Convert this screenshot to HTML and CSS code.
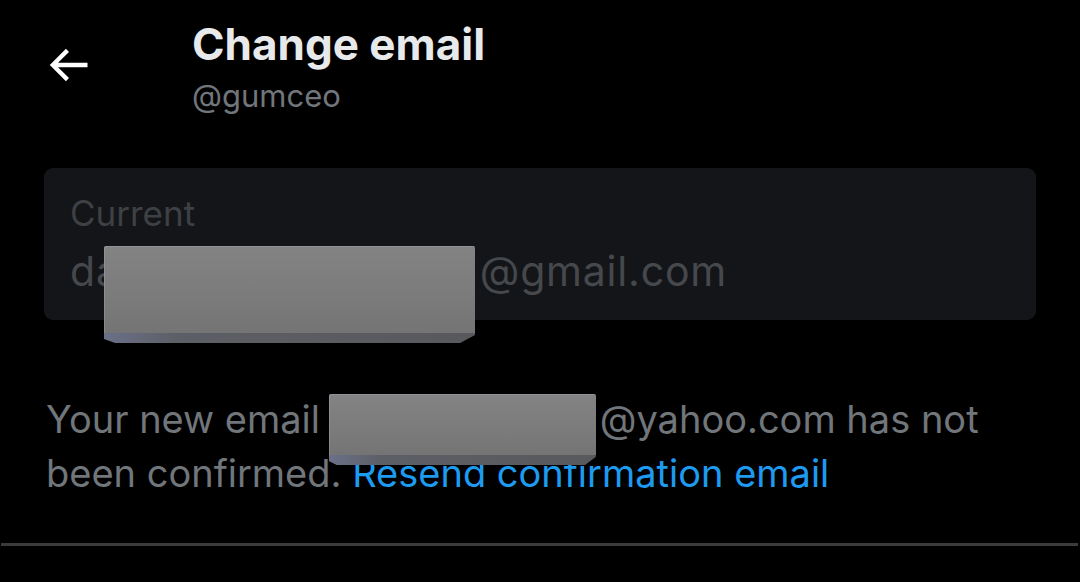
FILE: index.html
```html
<!DOCTYPE html>
<html lang="en">
<head>
<meta charset="utf-8">
<title>Change email</title>
<link rel="stylesheet" href="styles.css">
</head>
<body>
<div class="page">
  <header class="top">
    <div class="back">
      <svg viewBox="0 0 24 24" width="52" height="52" aria-hidden="true"><path fill="#ffffff" d="M7.414 13l5.043 5.04-1.414 1.42L3.586 12l7.457-7.46 1.414 1.42L7.414 11H21v2H7.414z"/></svg>
    </div>
    <div class="titles">
      <h1 class="title">Change email</h1>
      <div class="handle">@gumceo</div>
    </div>
  </header>
  <main class="content">
    <div class="field">
      <div class="label">Current</div>
      <div class="value">da<span class="gap gap-one"></span>@gmail.com<span class="redact redact-one"></span></div>
    </div>
    <p class="notice">Your new email <span class="gap gap-two"><span class="redact redact-two"></span></span>@yahoo.com has not been confirmed. <a class="link" href="#">Resend confirmation email</a></p>
  </main>
  <div class="divider"></div>
</div>
</body>
</html>
```

FILE: styles.css
```css
html, body {
  margin: 0;
  padding: 0;
  background: #000000;
}
body {
  font-family: Inter, "Noto Sans", "Liberation Sans", sans-serif;
  color: #e7e9ea;
  width: 1080px;
  height: 582px;
  overflow: hidden;
}
.page {
  display: flex;
  flex-direction: column;
}
.top {
  display: flex;
  align-items: flex-start;
  padding-top: 18px;
  height: 132px;
  box-sizing: border-box;
}
.back {
  width: 192px;
  padding-left: 42px;
  padding-top: 21px;
  box-sizing: border-box;
  flex: none;
}
.back svg {
  display: block;
}
.titles {
  display: flex;
  flex-direction: column;
}
.title {
  margin: 0;
  font-size: 44px;
  font-weight: 700;
  line-height: 52px;
  color: #e7e9ea;
  letter-spacing: 0;
}
.handle {
  font-size: 31px;
  line-height: 40px;
  margin-top: 6px;
  color: #71767b;
}
.content {
  padding: 36px 44px 0 44px;
}
.field {
  background: #141518;
  border-radius: 9px;
  height: 152px;
  box-sizing: border-box;
  padding: 25px 26px 0 26px;
}
.label {
  font-size: 35px;
  line-height: 40px;
  color: #3d4044;
}
.value {
  position: relative;
  font-size: 41px;
  line-height: 50px;
  letter-spacing: 0.8px;
  margin-top: 13px;
  color: #45484c;
  white-space: nowrap;
}
.gap {
  display: inline-block;
  position: relative;
  height: 1px;
}
.gap-one {
  width: 360px;
}
.gap-two {
  width: 269px;
}
.redact {
  position: absolute;
  border-radius: 2px 2px 0 0;
  background: linear-gradient(180deg, #838383 0%, #7b7b7b 60%, #747474 100%);
  box-shadow: inset 1px 1px 0 rgba(170, 175, 200, 0.35);
}
.redact::after {
  content: "";
  position: absolute;
  left: 0;
  right: 0;
  top: 100%;
  height: 10px;
  background: linear-gradient(90deg, #6a7088 0%, #5d5f66 20%, #58595d 100%);
  clip-path: polygon(0 0, 100% 0, 100% 20%, 96% 100%, 3% 100%, 0 60%);
}
.redact-one {
  left: 34px;
  top: 0;
  width: 371px;
  height: 87px;
}
.redact-two {
  left: -2px;
  bottom: -22px;
  width: 267px;
  height: 61px;
}
.notice {
  margin: 72px 0 0 2px;
  font-size: 38px;
  line-height: 54px;
  color: #71767b;
}
.link {
  color: #1d9bf0;
  text-decoration: none;
}
.divider {
  margin: 43px 2px 0 1px;
  height: 3px;
  background: #3b3b3e;
}
```
